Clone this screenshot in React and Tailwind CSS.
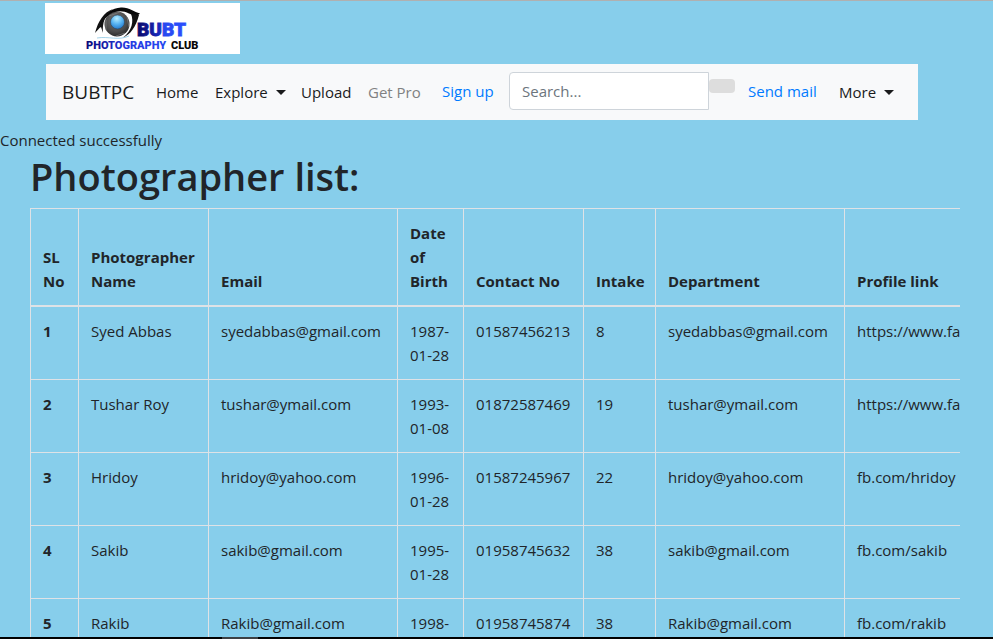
const photographers = [
  { name: "Syed Abbas", email: "syedabbas@gmail.com", birth: "1987-01-28", contact: "01587456213", intake: "8", link: "https://www.facebook.com/syedabbas" },
  { name: "Tushar Roy", email: "tushar@ymail.com", birth: "1993-01-08", contact: "01872587469", intake: "19", link: "https://www.facebook.com/tushar" },
  { name: "Hridoy", email: "hridoy@yahoo.com", birth: "1996-01-28", contact: "01587245967", intake: "22", link: "fb.com/hridoy" },
  { name: "Sakib", email: "sakib@gmail.com", birth: "1995-01-28", contact: "01958745632", intake: "38", link: "fb.com/sakib" },
  { name: "Rakib", email: "Rakib@gmail.com", birth: "1998-01-28", contact: "01958745874", intake: "38", link: "fb.com/rakib" },
];

const headings = ["SL No", "Photographer Name", "Email", "Date of Birth", "Contact No", "Intake", "Department", "Profile link"];

function Logo() {
  return (
    <svg viewBox="0 0 195 51" className="h-[51px] w-[195px] bg-white" role="img" aria-label="BUBT Photography Club">
      <defs>
        <radialGradient id="iris" cx="45%" cy="35%" r="65%">
          <stop offset="0" stopColor="#777" />
          <stop offset="0.7" stopColor="#4a4a4a" />
          <stop offset="1" stopColor="#2c2c2c" />
        </radialGradient>
        <radialGradient id="lens" cx="45%" cy="25%" r="80%">
          <stop offset="0" stopColor="#b9efff" />
          <stop offset="0.5" stopColor="#58b4f2" />
          <stop offset="1" stopColor="#1f74c8" />
        </radialGradient>
        <linearGradient id="bubt" x1="0" x2="1">
          <stop offset="0" stopColor="#080868" />
          <stop offset="0.5" stopColor="#1b2cc4" />
          <stop offset="0.55" stopColor="#2848f0" />
          <stop offset="1" stopColor="#2a50ff" />
        </linearGradient>
        <linearGradient id="photo" x1="0" x2="1">
          <stop offset="0" stopColor="#080878" />
          <stop offset="0.5" stopColor="#2338e0" />
          <stop offset="1" stopColor="#2448f0" />
        </linearGradient>
      </defs>
      <circle cx="72" cy="21" r="12.500" fill="url(#iris)" />
      <path d="M64 13 75 9M82 14 84 24M80 30 71 33M61 27 61 17" stroke="#8a8a8a" strokeWidth="0.6" />
      <circle cx="72.500" cy="19" r="7" fill="url(#lens)" stroke="#27384a" strokeWidth="0.5" />
      <path d="M57 20C60 10 67 5 76 4.500C84 4 89 9 95 10.500C93 13 89 13 84 10.500C75 6 64 8 57 20Z" fill="#080808" />
      <path d="M50 30C53 18 59 9 68 6C60 12 57 20 58 30L56 24C54 25 52 28 50 30Z" fill="#111" />
      <path d="M86 11C89 18 87 28 78 34.500C85 32 91 24 94 12Z" fill="#111" />
      <path d="M52 35C64 33 73 38 84 33" fill="none" stroke="#65b5dc" strokeWidth="0.6" />
      <text x="92" y="33" fontSize="19" fontWeight="900" fontFamily="Roboto, sans-serif" fill="url(#bubt)" stroke="url(#bubt)" strokeWidth="0.8">BUBT</text>
      <text x="41" y="46" fontSize="11" fontWeight="900" fontFamily="Roboto, sans-serif" fill="url(#photo)">PHOTOGRAPHY</text>
      <text x="126" y="46" fontSize="11" fontWeight="900" fontFamily="Roboto, sans-serif" fill="#080808">CLUB</text>
    </svg>
  );
}

function Caret() {
  return <span aria-hidden="true" className="border-x-[5px] border-t-[5px] border-x-transparent border-t-current" />;
}

function Navbar() {
  return (
    <nav className="mt-[10px] mr-[75px] ml-[46px] flex h-14 items-center bg-[#f8f9fa] pl-4 text-[#1a1b1c]">
      <a href="#" className="w-[94px] shrink-0 text-[19px]">BUBTPC</a>
      <a href="#" className="w-[59px] shrink-0">Home</a>
      <button type="button" className="flex w-[86px] shrink-0 items-center gap-2">Explore <Caret /></button>
      <a href="#" className="w-[67px] shrink-0">Upload</a>
      <a href="#" className="w-[74px] shrink-0 text-[#808182]">Get Pro</a>
      <div className="flex shrink-0 items-center pb-[2px]">
        <a href="#" className="w-[67px] text-[#007bff]">Sign up</a>
        <form className="flex" onSubmit={(event) => event.preventDefault()}>
          <input
            type="search"
            aria-label="Search"
            placeholder="Search..."
            className="h-[38px] w-[200px] rounded-l border border-[#ced4da] bg-white px-3 outline-none placeholder:text-[#6c757d]"
          />
          <button type="submit" aria-label="Submit search" className="mt-[7px] mr-[13px] h-[14px] w-[26px] rounded bg-[#ddd]" />
        </form>
        <a href="#" className="w-[91px] text-[#007bff]">Send mail</a>
      </div>
      <button type="button" className="flex shrink-0 items-center gap-2">More <Caret /></button>
    </nav>
  );
}

function PhotographerTable() {
  return (
    <div className="overflow-hidden">
      <table className="w-[1140px] table-fixed border-collapse border border-[#dee2e6] text-left">
        <colgroup>
          <col className="w-[48px]" />
          <col className="w-[130px]" />
          <col className="w-[189px]" />
          <col className="w-[66px]" />
          <col className="w-[120px]" />
          <col className="w-[72px]" />
          <col className="w-[189px]" />
          <col />
        </colgroup>
        <thead>
          <tr>
            {headings.map((heading) => (
              <th key={heading} scope="col" className="border border-b-2 border-[#dee2e6] p-3 align-bottom font-bold">{heading}</th>
            ))}
          </tr>
        </thead>
        <tbody className="[&_td]:border [&_td]:border-[#dee2e6] [&_td]:p-3 [&_td]:align-top">
          {photographers.map((person, index) => (
            <tr key={person.name}>
              <th scope="row" className="border border-[#dee2e6] p-3 align-top font-bold">{index + 1}</th>
              <td>{person.name}</td>
              <td>{person.email}</td>
              <td>{person.birth}</td>
              <td>{person.contact}</td>
              <td>{person.intake}</td>
              <td>{person.email}</td>
              <td className="whitespace-nowrap">{person.link}</td>
            </tr>
          ))}
        </tbody>
      </table>
    </div>
  );
}

export default function App() {
  return (
    <div className="flex h-screen flex-col overflow-hidden border-t border-[#b0b0b0] bg-[#87ceeb] font-['Open_Sans',sans-serif] text-[15px] leading-6 text-[#212529]">
      <div className="min-h-0 flex-1 overflow-hidden">
        <header className="pt-[2px]">
          <a href="#" className="ml-[45px] block w-[195px]"><Logo /></a>
          <Navbar />
        </header>
        <p className="mt-2">Connected successfully</p>
        <main className="mr-[33px] ml-[30px]">
          <h1 className="mb-2 text-[38px] leading-[48px] font-semibold">Photographer list:</h1>
          <PhotographerTable />
        </main>
      </div>
      <footer className="h-[2px] shrink-0 bg-black">
        <div className="ml-[222px] h-full w-[36px] bg-[#3c4043]" />
      </footer>
    </div>
  );
}
